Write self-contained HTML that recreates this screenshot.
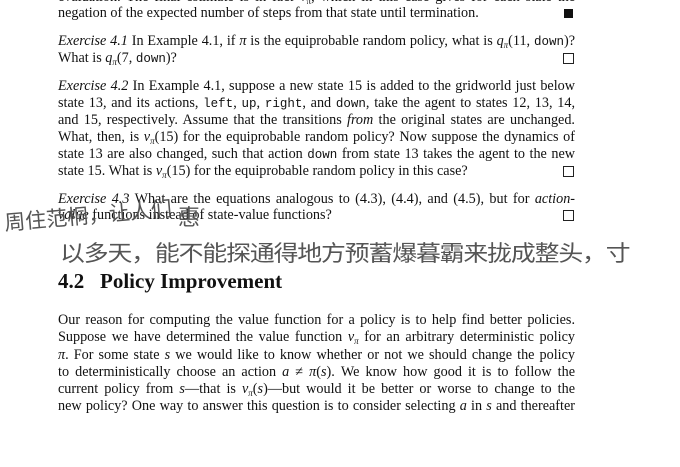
<html><head><style>
body{margin:0;width:680px;height:467px;background:#fff;position:relative;overflow:hidden;font-family:"Liberation Serif",serif;color:#111}
.l{position:absolute;left:58px;width:517px;font-size:14.2px;line-height:17px;height:17px;white-space:nowrap;text-align:justify;text-align-last:justify}
.l.s{text-align-last:left}
sub{font-size:9px;line-height:0;vertical-align:-3px}
.tt{font-family:"Liberation Mono",monospace;font-size:12.5px}
i{font-style:italic}
.bx{position:absolute;left:563px;width:9px;height:9px;border:1px solid #222}
.hw{position:absolute;font-family:"WenQuanYi Zen Hei","Noto Sans CJK SC",sans-serif;color:#555;white-space:nowrap}
</style></head><body>
<div class="l" style="top:-11px">evaluation. The final estimate is in fact v<sub>π</sub>, which in this case gives for each state the</div>
<div class="l s" style="top:5px">negation of the expected number of steps from that state until termination.</div>
<div style="position:absolute;left:564px;top:9px;width:9px;height:9px;background:#111"></div>

<div class="l" style="top:33px"><i>Exercise 4.1</i> In Example 4.1, if <i>π</i> is the equiprobable random policy, what is <i>q<sub>π</sub></i>(11, <span class="tt">down</span>)?</div>
<div class="l s" style="top:50px">What is <i>q<sub>π</sub></i>(7, <span class="tt">down</span>)?</div>
<div class="bx" style="top:53px"></div>

<div class="l" style="top:78px"><i>Exercise 4.2</i> In Example 4.1, suppose a new state 15 is added to the gridworld just below</div>
<div class="l" style="top:95px">state 13, and its actions, <span class="tt">left</span>, <span class="tt">up</span>, <span class="tt">right</span>, and <span class="tt">down</span>, take the agent to states 12, 13, 14,</div>
<div class="l" style="top:112px">and 15, respectively. Assume that the transitions <i>from</i> the original states are unchanged.</div>
<div class="l" style="top:129px">What, then, is <i>v<sub>π</sub></i>(15) for the equiprobable random policy? Now suppose the dynamics of</div>
<div class="l" style="top:146px">state 13 are also changed, such that action <span class="tt">down</span> from state 13 takes the agent to the new</div>
<div class="l s" style="top:163px">state 15. What is <i>v<sub>π</sub></i>(15) for the equiprobable random policy in this case?</div>
<div class="bx" style="top:166px"></div>

<div class="l" style="top:191px"><i>Exercise 4.3</i> What are the equations analogous to (4.3), (4.4), and (4.5), but for <i>action-</i></div>
<div class="l s" style="top:207px"><i>value</i> functions instead of state-value functions?</div>
<div class="bx" style="top:210px"></div>

<div class="hw" style="left:4px;top:200px;font-size:21px;transform:rotate(-5deg)">周住范桐，让人们</div>
<div class="hw" style="left:178px;top:200px;font-size:22px">惠</div>
<div class="hw" style="left:60px;top:236px;font-size:22px;letter-spacing:-1px;transform:scaleX(1.13);transform-origin:left">以多天，能不能探通得地方预蓄爆暮霸来拢成整头，寸</div>

<div style="position:absolute;left:58px;top:269px;font-size:21px;font-weight:bold;white-space:nowrap">4.2&nbsp;&nbsp;&nbsp;Policy Improvement</div>

<div class="l" style="top:312px">Our reason for computing the value function for a policy is to help find better policies.</div>
<div class="l" style="top:329px">Suppose we have determined the value function <i>v<sub>π</sub></i> for an arbitrary deterministic policy</div>
<div class="l" style="top:347px"><i>π</i>. For some state <i>s</i> we would like to know whether or not we should change the policy</div>
<div class="l" style="top:364px">to deterministically choose an action <i>a</i> ≠ <i>π</i>(<i>s</i>). We know how good it is to follow the</div>
<div class="l" style="top:381px">current policy from <i>s</i>—that is <i>v<sub>π</sub></i>(<i>s</i>)—but would it be better or worse to change to the</div>
<div class="l" style="top:398px">new policy? One way to answer this question is to consider selecting <i>a</i> in <i>s</i> and thereafter</div>
</body></html>
